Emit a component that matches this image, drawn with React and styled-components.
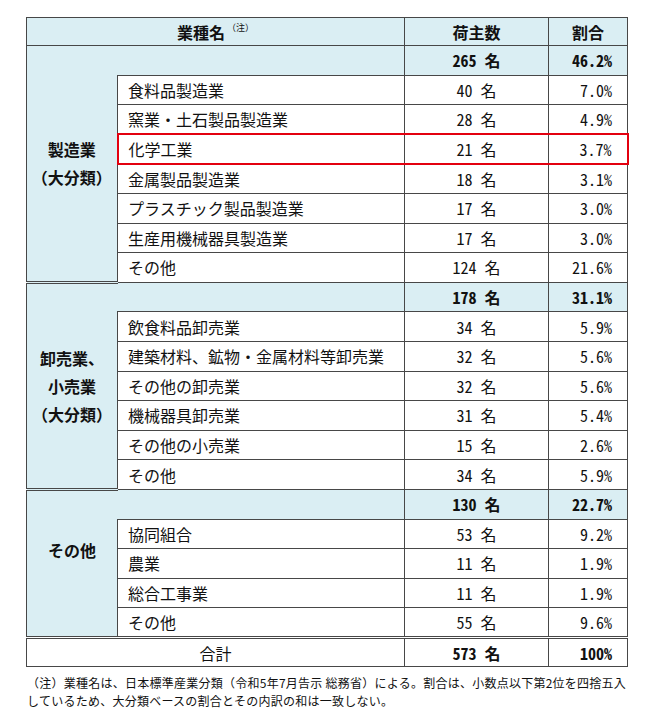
import React from "react"
import styled, { createGlobalStyle } from "styled-components"

const blue = "#daeef3"
const line = "#474747"
const red = "#e3000f"

const GlobalStyle = createGlobalStyle`
    body {
        margin: 0;
        background: #fff;
        color: #111;
        font-family: "Noto Sans CJK JP", "Noto Sans", sans-serif;
    }
`

const Page = styled.div`
    padding: 17px 0 0 26px;
    width: 602px;
`

const Table = styled.table`
    width: 601px;
    table-layout: fixed;
    border-collapse: collapse;
    font-size: 16px;
`

const Row = styled.tr`
    height: ${p => (p.$head ? "28px" : "29.6px")};
`

const HeadCell = styled.th`
    background: ${blue};
    border: 1px solid ${line};
    font-weight: 700;
    text-align: center;
    padding: 0;
    line-height: 20px;
`

const Sup = styled.span`
    font-size: 9px;
    font-weight: 400;
    vertical-align: top;
    line-height: 12px;
    margin-left: 2px;
`

const CategoryCell = styled.td`
    background: ${blue};
    border: 1px solid ${line};
    border-right: none;
    border-bottom: 3px double ${line};
    font-weight: 700;
    text-align: center;
    vertical-align: middle;
    line-height: 28px;
    padding: 0 0 ${p => (p.$lift ? "27px" : "0")};
    white-space: nowrap;
`

const NameCell = styled.td`
    background: ${p => (p.$sub ? blue : "#fff")};
    border: 1px solid ${line};
    border-left: ${p => (p.$sub ? "none" : `1px solid ${line}`)};
    padding: 0 0 0 10px;
    white-space: nowrap;
    ${p => p.$hl && `
        border-top: 2px solid ${red};
        border-bottom: 2px solid ${red};
        border-left: 2px solid ${red};
    `}
    ${p => p.$last && `border-bottom: 3px double ${line};`}
`

const CountCell = styled.td`
    background: ${p => (p.$sub ? blue : "#fff")};
    border: 1px solid ${line};
    font-weight: ${p => (p.$sub || p.$total ? 700 : 400)};
    font-feature-settings: "hwid";
    text-align: center;
    padding: 0;
    ${p => p.$hl && `
        border-top: 2px solid ${red};
        border-bottom: 2px solid ${red};
    `}
    ${p => p.$last && `border-bottom: 3px double ${line};`}
`

const RatioCell = styled(CountCell)`
    text-align: right;
    padding-right: 15px;
    ${p => p.$hl && `border-right: 2px solid ${red};`}
`

const TotalLabel = styled.td`
    border: 1px solid ${line};
    text-align: center;
    padding: 0;
`

const Note = styled.div`
    margin-top: 7px;
    padding-left: 1px;
    font-size: 12px;
    line-height: 17.5px;
    letter-spacing: 0.25px;
    color: #111;
    white-space: nowrap;
`

const groups = [
    {
        label: ["製造業", "（大分類）"],
        count: "265",
        ratio: "46.2％",
        items: [
            ["食料品製造業", "40", "7.0％"],
            ["窯業・土石製品製造業", "28", "4.9％"],
            ["化学工業", "21", "3.7％", true],
            ["金属製品製造業", "18", "3.1％"],
            ["プラスチック製品製造業", "17", "3.0％"],
            ["生産用機械器具製造業", "17", "3.0％"],
            ["その他", "124", "21.6％"],
        ],
    },
    {
        label: ["卸売業、", "小売業", "（大分類）"],
        count: "178",
        ratio: "31.1％",
        items: [
            ["飲食料品卸売業", "34", "5.9％"],
            ["建築材料、鉱物・金属材料等卸売業", "32", "5.6％"],
            ["その他の卸売業", "32", "5.6％"],
            ["機械器具卸売業", "31", "5.4％"],
            ["その他の小売業", "15", "2.6％"],
            ["その他", "34", "5.9％"],
        ],
    },
    {
        label: ["その他"],
        count: "130",
        ratio: "22.7％",
        lift: true,
        last: true,
        items: [
            ["協同組合", "53", "9.2％"],
            ["農業", "11", "1.9％"],
            ["総合工事業", "11", "1.9％"],
            ["その他", "55", "9.6％"],
        ],
    },
]

const Group = ({ group }) => (
    <>
        <Row>
            <CategoryCell rowSpan={group.items.length + 1} $lift={group.lift}>
                {group.label.map((t, i) => (
                    <div key={i}>{t}</div>
                ))}
            </CategoryCell>
            <NameCell $sub />
            <CountCell $sub>{group.count} 名</CountCell>
            <RatioCell $sub>{group.ratio}</RatioCell>
        </Row>
        {group.items.map(([name, count, ratio, hl], i) => {
            const last = group.last && i === group.items.length - 1
            return (
                <Row key={name + i}>
                    <NameCell $hl={hl} $last={last}>{name}</NameCell>
                    <CountCell $hl={hl} $last={last}>{count} 名</CountCell>
                    <RatioCell $hl={hl} $last={last}>{ratio}</RatioCell>
                </Row>
            )
        })}
    </>
)

const App = () => (
    <Page lang="ja">
        <GlobalStyle />
        <Table>
            <colgroup>
                <col style={{ width: 91 }} />
                <col style={{ width: 287 }} />
                <col style={{ width: 144 }} />
                <col style={{ width: 79 }} />
            </colgroup>
            <thead>
                <Row $head>
                    <HeadCell colSpan={2}>
                        業種名<Sup>（注）</Sup>
                    </HeadCell>
                    <HeadCell>荷主数</HeadCell>
                    <HeadCell>割合</HeadCell>
                </Row>
            </thead>
            <tbody>
                {groups.map((g, i) => (
                    <Group key={i} group={g} />
                ))}
                <Row>
                    <TotalLabel colSpan={2}>合計</TotalLabel>
                    <CountCell $total>573 名</CountCell>
                    <RatioCell $total>100％</RatioCell>
                </Row>
            </tbody>
        </Table>
        <Note>
            <div>（注）業種名は、日本標準産業分類（令和5年7月告示 総務省）による。割合は、小数点以下第2位を四捨五入</div>
            <div>しているため、大分類ベースの割合とその内訳の和は一致しない。</div>
        </Note>
    </Page>
)

export default App
